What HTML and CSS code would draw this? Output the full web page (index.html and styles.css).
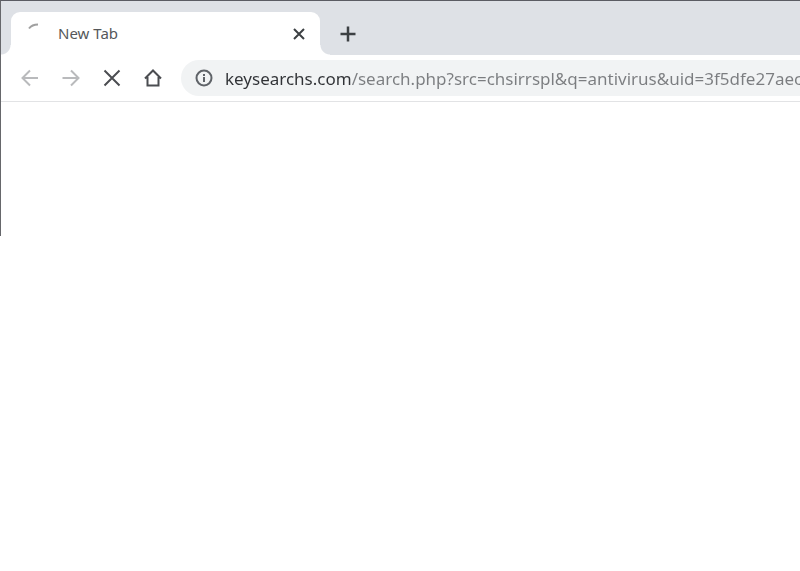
FILE: index.html
```
<!DOCTYPE html>
<html lang="en">
<head>
	<meta charset="UTF-8">
	<title>New Tab</title>
	<link rel="stylesheet" href="styles.css">
</head>
<body>
	<div class="browser">
		<div class="tabs">
			<div class="tab">
				<svg class="spinner" width="18" height="18" viewBox="0 0 18 18"><path d="M3 7.500Q6 3.500 12 3.500"/></svg>
				<span class="title">New Tab</span>
				<button class="close" aria-label="Close tab">
					<svg width="12" height="12" viewBox="0 0 12 12"><path d="M1 1l10 10M11 1L1 11"/></svg>
				</button>
			</div>
			<button class="add" aria-label="New tab">
				<svg width="16" height="16" viewBox="0 0 16 16"><path d="M8 .5v15M.5 8h15"/></svg>
			</button>
		</div>
		<div class="toolbar">
			<button class="off" aria-label="Back">
				<svg width="20" height="20" viewBox="0 0 20 20"><path d="M18 10H2.500M10 2.500L2.500 10l7.500 7.500"/></svg>
			</button>
			<button class="off" aria-label="Forward">
				<svg width="20" height="20" viewBox="0 0 20 20"><path d="M1.500 10h16M10 2.500l7.500 7.500-7.500 7.500"/></svg>
			</button>
			<button aria-label="Stop">
				<svg width="20" height="20" viewBox="0 0 20 20"><path d="M2.500 2.500l15 15M17.500 2.500l-15 15"/></svg>
			</button>
			<button aria-label="Home">
				<svg width="20" height="20" viewBox="0 0 20 20"><path d="M2 10.500l8-8 8 8M4.500 9v8.500h11V9"/></svg>
			</button>
			<div class="address">
				<svg width="18" height="18" viewBox="0 0 18 18"><circle cx="9" cy="9" r="7.500"/><path d="M9 8v5M9 5v2"/></svg>
				<input class="url" type="text" aria-label="Address" value="keysearchs.com/search.php?src=chsirrspl&amp;q=antivirus&amp;uid=3f5dfe27aec">
			</div>
		</div>
		<div class="page"></div>
	</div>
</body>
</html>
```

FILE: styles.css
```
*{
	margin: 0;
	padding: 0;
	box-sizing: border-box;
}
body{
	background-color: #fff;
	font-family: "Noto Sans", "Open Sans", sans-serif;
	overflow: hidden;
}
svg{
	display: block;
	flex: none;
	fill: none;
	stroke: #4b4d51;
	stroke-width: 2;
}
button{
	display: flex;
	align-items: center;
	justify-content: center;
	flex: none;
	border: 0;
	background: none;
}
.browser{
	border-top: 1px solid #5b5c63;
	border-left: 1px solid #66676b;
}
.tabs{
	display: flex;
	padding: 11px 0 0 10px;
	background-color: #dee1e6;
}
.tab{
	position: relative;
	display: flex;
	align-items: center;
	width: 309px;
	height: 43px;
	padding: 0 12px 0 15px;
	border-radius: 9px 9px 0 0;
	background-color: #fff;
}
/* curved feet of the active tab */
.tab::before,
.tab::after{
	content: "";
	position: absolute;
	bottom: 0;
	width: 10px;
	height: 10px;
}
.tab::before{
	right: 100%;
	background: radial-gradient(circle at 0 0, transparent 9px, #fff 10px);
}
.tab::after{
	left: 100%;
	background: radial-gradient(circle at 100% 0, transparent 9px, #fff 10px);
}
.spinner{
	margin-bottom: 8px;
	stroke: #a0a0a0;
}
.title{
	flex: 1;
	margin-left: 14px;
	padding-bottom: 2px;
	font-size: 15px;
	color: #55575a;
}
.close{
	width: 18px;
	height: 18px;
}
.add{
	width: 36px;
	height: 43px;
	margin-left: 10px;
}
.add svg,
.close svg{
	stroke: #3c4043;
}
.add svg{
	stroke-width: 2.5;
}
.toolbar{
	display: flex;
	align-items: center;
	gap: 5px;
	height: 47px;
	padding-left: 11px;
	border-bottom: 1px solid #e2e3e5;
}
.toolbar button{
	width: 36px;
	height: 36px;
}
.off svg{
	stroke: #b9babc;
}
.address{
	display: flex;
	align-items: center;
	flex: 1;
	min-width: 0;
	height: 36px;
	margin-left: 5px;
	padding-left: 14px;
	border-radius: 18px 0 0 18px;
	background-color: #f1f3f4;
}
.address svg{
	stroke: #5f6368;
}
/* the host is darker than the rest of the address */
.url{
	flex: 1;
	min-width: 0;
	height: 36px;
	margin-left: 12px;
	border: 0;
	outline: 0;
	font-family: inherit;
	font-size: 17px;
	color: transparent;
	background: linear-gradient(to right, #303236 126px, #7b7d80 126px);
	-webkit-background-clip: text;
	background-clip: text;
}
.page{
	height: 134px;
}
```
